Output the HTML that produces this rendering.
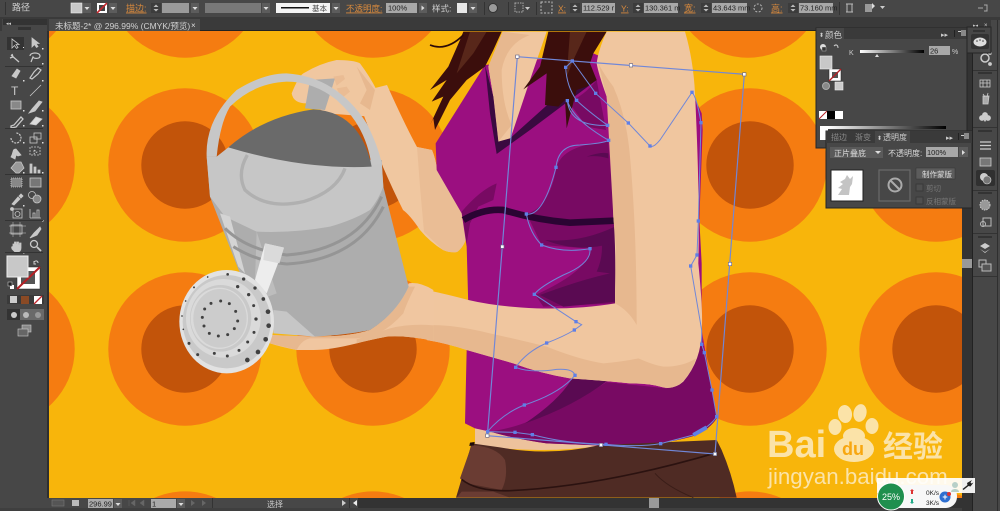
<!DOCTYPE html>
<html><head><meta charset="utf-8"><style>
html,body{margin:0;padding:0;background:#474747;width:1000px;height:511px;overflow:hidden}
svg{display:block;overflow:hidden;filter:blur(.35px)}
text{font-family:"Liberation Sans","Noto Sans CJK SC",sans-serif}
</style></head><body>
<svg width="1000" height="511" viewBox="0 0 1000 511" xmlns="http://www.w3.org/2000/svg">
<defs>
<g id="ring"><circle r="76.7" fill="#F57C11"/><circle r="43.7" fill="#C2540A"/></g>
<g id="ringb"><path d="M-68.2,498A76.7,76.7 0 0 1 68.2,498Z" fill="#F57C11"/><path d="M-26.2,498A43.7,43.7 0 0 1 26.2,498Z" fill="#C2540A"/></g>
<clipPath id="cv"><rect x="49" y="31" width="913" height="467"/></clipPath>
<g id="dd"><rect width="8" height="10" fill="#5c5c5c"/><path d="M1.5,4h5l-2.500,3z" fill="#ddd"/></g>
<g id="sp"><rect width="10" height="10" fill="#3c3c3c"/><path d="M2.500,4l2.500,-2.500 2.500,2.500zM2.500,6l2.500,2.500 2.500,-2.500z" fill="#bbb"/></g>
</defs>

<rect width="1000" height="511" fill="#474747"/>
<g clip-path="url(#cv)">
<rect x="49" y="31" width="913" height="467" fill="#F8B50B"/>
<use href="#ring" x="-2" y="-19"/><use href="#ring" x="185" y="-19"/><use href="#ring" x="373" y="-19"/><use href="#ring" x="748" y="-19"/><use href="#ring" x="935" y="-19"/>
<use href="#ring" x="-2" y="165"/><use href="#ring" x="185" y="165"/><use href="#ring" x="373" y="165"/><use href="#ring" x="750" y="165"/><use href="#ring" x="936" y="165"/>
<use href="#ring" x="-2" y="349"/><use href="#ring" x="185" y="349"/><use href="#ring" x="373" y="349"/><use href="#ring" x="750" y="349"/><use href="#ring" x="936" y="349"/>
<use href="#ringb" x="-2" y="35"/><use href="#ringb" x="185" y="35"/><use href="#ringb" x="373" y="35"/><use href="#ringb" x="750" y="35"/><use href="#ringb" x="936" y="35"/>

<!-- left arm -->
<path d="M367,90L387,85Q405,125 417,147L432,150Q436,160 437,170Q450,190 462,213Q468,228 467,237Q463,248 457,252Q450,253 443,250Q430,242 420,230Q410,215 403,210Q393,190 383,167L363,113Z" fill="#F0C7A0"/>
<path d="M417,147L432,150Q436,160 437,170Q450,190 462,213Q468,228 467,237Q463,248 457,252Q450,253 443,250L424,232Q420,190 417,147Z" fill="#EABD95"/>

<!-- woman, zoom coords -->
<g transform="translate(430,30) scale(.33333)">
<path d="M135,1190L135,1245Q330,1275 530,1245L530,1190Z" fill="#EDC29C"/>
<!-- tank -->
<path d="M165,105L17,340L20,420L95,550L110,650L115,830L110,960L105,1180L135,1195L180,1205Q270,1230 350,1240L600,1250Q720,1240 800,1215Q840,1195 860,1165L815,900L815,700L808,570L818,300L815,250L795,205L560,100L490,70Z" fill="#9B0F80"/>
<path d="M420,1045L710,1075L810,900L860,1165Q840,1195 800,1215Q720,1240 600,1250L350,1240Q270,1230 180,1205Q240,1195 280,1180Q340,1160 400,1130Q470,1095 540,1050Z" fill="#780A63"/>
<path d="M285,1180Q430,1130 535,1050L430,1040Q390,1110 285,1180Z" fill="#5A0A52"/>
<path d="M380,410Q400,345 535,335L552,560L556,820L340,830L316,795Q480,720 480,656L335,645L290,552Q360,530 380,410Z" fill="#780A63"/>
<path d="M515,635L555,590L558,815L400,830L330,795Q450,750 540,730L500,725Q520,680 515,635Z" fill="#5A0A52"/>
<path d="M345,630Q450,640 555,590L555,640L500,650Q420,660 345,630Z" fill="#5A0A52"/>
<path d="M470,380Q510,365 535,370L535,385Q500,375 470,380Z" fill="#5A0A52"/>
<path d="M95,545Q150,480 200,460L190,510L145,530L120,580L110,640Z" fill="#780A63"/>
<path d="M100,570Q160,535 220,540Q320,570 420,578L552,572" fill="none" stroke="#2B0433" stroke-width="20"/>
<path d="M500,150L528,300L470,290L415,215Q460,200 500,150Z" fill="#780A63"/>
<!-- chest -->
<path d="M218,5L350,5L300,150L240,330L205,335L190,200L175,110Z" fill="#F0C69F"/>
<path d="M218,5L300,15Q230,40 215,120Q215,220 245,285L205,335L190,200L175,110Z" fill="#E7B88F"/>
<path d="M165,105L180,250L200,372L300,300L500,150L480,110L240,325L205,335L190,200Z" fill="#3A0A40"/>
<!-- hair -->
<path d="M100,5L215,5L190,60L165,110L110,150L60,210L15,300L10,265L0,285L40,200L5,215L50,150L0,180L55,110L90,30Z" fill="#3B0E0C"/>
<path d="M120,5L170,5L130,70L80,130Z" fill="#58271A"/>
<path d="M355,5L530,5L490,70L480,100L500,150L470,170L440,180L410,295L405,210L385,230L345,225L350,130L280,178L330,110Z" fill="#3B0E0C"/>
<path d="M420,5L470,5L430,90L410,140Z" fill="#58271A"/>
<path d="M0,45Q50,65 100,15" fill="none" stroke="#2c0a08" stroke-width="5"/>
<!-- right arm -->
<path d="M530,5L765,5Q790,90 795,190Q810,500 805,700Q820,850 815,900Q815,990 760,1055Q735,1078 700,1072Q660,1060 600,1060Q500,1050 420,1045Q330,1030 250,1000L110,960Q50,940 -10,930L-10,780Q60,795 115,810Q200,830 320,835Q450,838 555,820L555,790Q558,650 550,560Q545,350 530,200Q505,130 500,100Q505,60 530,5Z" fill="#F0C69F"/>
<path d="M505,100Q520,130 550,170Q590,260 600,380Q620,600 620,885Q595,840 555,820L558,650L550,560L530,200Z" fill="#E7B88F"/>
<path d="M-10,885Q30,885 60,888Q120,895 180,910Q270,930 350,950Q450,990 520,1000Q580,995 625,985Q670,1005 700,1010Q760,1010 798,985Q780,1040 745,1065Q720,1078 700,1072Q660,1060 600,1060Q500,1050 420,1045Q330,1030 250,1000L110,960Q50,940 -10,930Z" fill="#E7B88F"/>
</g>

<!-- pants -->
<g transform="translate(400,440) scale(.33333)">
<path d="M215,10L300,22Q450,50 600,15L950,0L965,30Q995,100 1010,173L168,173Q190,100 215,10Z" fill="#4F2B24"/>
<path d="M215,15Q290,20 315,60Q325,110 305,150L200,130L180,115Z" fill="#6A3C33"/>
<path d="M170,173L330,173L280,155L185,155Z" fill="#6A3C33"/>
<path d="M185,118Q230,155 330,152Q600,140 950,38" fill="none" stroke="#2b1210" stroke-width="5"/>
<path d="M765,100Q800,140 880,173" fill="none" stroke="#3a1d18" stroke-width="3"/>
<path d="M210,8l14,-2-2,10-14,2z" fill="#1e0c0a"/>
</g>

<!-- can -->
<g transform="translate(170,60) scale(.33333)">
<!-- hand top -->
<path d="M365,100Q385,50 400,40Q450,10 500,0Q550,0 570,10Q600,50 620,90L600,170L470,160Q420,130 410,130Q370,130 365,100Z" fill="#F0C7A0"/>
<path d="M560,20L615,90L600,150L570,130L590,90Z" fill="#E7B88F"/>
<path d="M405,145L420,60L495,55L465,150Z" fill="#ADADAD"/>
<path d="M490,50l30,-5 5,12-25,20zM500,85l30,-5 10,15-25,20z" fill="#E7B88F" opacity=".7"/>
<!-- bottom hand -->
<path d="M300,825L430,830Q540,830 600,810Q680,760 716,670Q750,665 790,690L790,842Q700,825 650,830Q600,840 560,850Q480,870 430,870L380,870Q330,860 300,850Z" fill="#F0C6A0"/>
<path d="M300,825L430,830Q540,830 600,810Q680,760 716,680L735,680Q710,730 700,760Q650,815 600,830L560,835L420,835Q395,840 380,870L300,850Z" fill="#E7B88F"/>
<path d="M790,796Q720,790 660,805L560,838L560,850Q600,840 650,830Q700,825 790,842Z" fill="#E7B88F"/>
<!-- body -->
<path d="M110,290L120,410L210,640L270,780L300,810L430,830Q530,825 600,810Q680,760 716,680L640,380L635,300Z" fill="#ADADAD"/>
<path d="M110,290L140,290L175,262L600,320L635,305L640,380Q625,420 600,450Q550,480 480,500Q370,520 260,515L165,470L120,410Z" fill="#C6C6C6"/>
<path d="M260,515L320,700L280,715L255,660Z" fill="#BDBDBD"/>
<path d="M310,750L350,755L435,830L310,820Z" fill="#C6C6C6"/>
<path d="M150,460L180,470L225,640L205,620Z" fill="#D4D4D4"/>
<path d="M165,505Q230,570 350,585Q560,570 635,410" fill="none" stroke="#959595" stroke-width="9"/>
<path d="M190,560Q260,605 350,612Q560,600 640,440" fill="none" stroke="#959595" stroke-width="9"/>
<path d="M232,285Q200,340 225,390Q290,450 400,425Q500,395 525,325" fill="none" stroke="#B0B0B0" stroke-width="10"/>
<!-- opening -->
<path d="M175,262Q280,170 430,148Q570,155 605,320Q400,330 175,262Z" fill="#6A6A6A"/>
<!-- handle -->
<path d="M140,290L110,290Q105,180 200,90Q280,40 350,40Q500,50 590,190Q625,260 635,310L605,320Q590,200 500,120Q430,65 350,65Q250,70 180,140Q150,190 140,290Z" fill="#C7C7C7"/>
<!-- spout strip -->
<path d="M285,550L342,563L290,700L255,660Z" fill="#EDEDED"/>
<path d="M285,550L342,563L328,610L280,600Z" fill="#DADADA"/>
<!-- rose -->
<ellipse cx="170" cy="785" rx="142" ry="155" fill="#E2E2E2"/>
<ellipse cx="170" cy="785" rx="132" ry="140" fill="#C9C9C9"/>
<ellipse cx="160" cy="775" rx="112" ry="118" fill="#DADADA"/>
<ellipse cx="152" cy="775" rx="92" ry="100" fill="#C9C9C9"/>
<ellipse cx="148" cy="775" rx="86" ry="92" fill="#DADADA"/>
<ellipse cx="150" cy="775" rx="80" ry="88" fill="#CCCCCC"/>
<g fill="#404040">
<circle cx="152" cy="723" r="4.500"/><circle cx="178" cy="731" r="4.500"/><circle cx="197" cy="754" r="4.500"/><circle cx="203" cy="783" r="4.500"/><circle cx="193" cy="806" r="4.500"/><circle cx="173" cy="824" r="4.500"/><circle cx="145" cy="828" r="4.500"/><circle cx="118" cy="820" r="4.500"/><circle cx="102" cy="798" r="4.500"/><circle cx="97" cy="772" r="4.500"/><circle cx="104" cy="747" r="4.500"/><circle cx="123" cy="730" r="4.500"/>
<circle cx="173" cy="643" r="4"/><circle cx="221" cy="657" r="5"/><circle cx="255" cy="684" r="5"/><circle cx="280" cy="717" r="5.500"/><circle cx="294" cy="755" r="7"/><circle cx="296" cy="797" r="7"/><circle cx="287" cy="838" r="7"/><circle cx="264" cy="876" r="7"/><circle cx="232" cy="900" r="7"/><circle cx="172" cy="888" r="4.500"/><circle cx="133" cy="880" r="4.500"/><circle cx="83" cy="884" r="4.500"/><circle cx="57" cy="850" r="4.500"/><circle cx="40" cy="808" r="2.500"/><circle cx="36" cy="768" r="2.500"/><circle cx="47" cy="723" r="2.500"/><circle cx="72" cy="682" r="3"/><circle cx="113" cy="651" r="2.500"/>
<circle cx="203" cy="680" r="5"/><circle cx="236" cy="704" r="5"/><circle cx="251" cy="737" r="4.500"/><circle cx="258" cy="777" r="5"/><circle cx="252" cy="817" r="4.500"/><circle cx="233" cy="846" r="4.500"/><circle cx="207" cy="871" r="4.500"/>
</g>
</g>

<!-- selection path -->
<g transform="translate(430,30) scale(.33333)">
<path d="M262,80L943,133L855,1272L172,1217Z" fill="none" stroke="#7087D8" stroke-width="3.500"/>
<path d="M172,1205Q220,1150 283,1125Q390,1090 435,1036Q430,1015 380,1018Q300,1030 257,1012Q290,965 350,939Q400,920 433,900L455,884L438,875L313,793Q330,770 400,735Q485,700 480,656Q400,670 335,645Q300,610 289,552Q340,560 378,412Q385,345 450,345Q520,340 536,331Q430,270 412,212Q420,290 533,286Q470,240 440,211Q410,170 407,112L427,93L497,190L595,279L660,348Q670,355 690,330L786,187Q800,200 813,278L805,573L801,675L782,708L815,900L815,943L823,968L846,1080L860,1160Q840,1190 790,1215L692,1241Q630,1252 528,1243Q400,1240 307,1214L255,1207Z" fill="none" stroke="#7087D8" stroke-width="3"/>
<path d="M790,1215L830,1192" stroke="#5F7FE6" stroke-width="12" fill="none"/>
<g fill="#5F7FE6">
<rect x="168" y="1200" width="10" height="10"/><rect x="278" y="1120" width="10" height="10"/><rect x="430" y="1031" width="10" height="10"/><rect x="252" y="1007" width="10" height="10"/><rect x="345" y="934" width="10" height="10"/><rect x="428" y="895" width="10" height="10"/><rect x="433" y="870" width="10" height="10"/><rect x="308" y="788" width="10" height="10"/><rect x="475" y="651" width="10" height="10"/><rect x="330" y="640" width="10" height="10"/><rect x="284" y="547" width="10" height="10"/><rect x="373" y="407" width="10" height="10"/><rect x="531" y="326" width="10" height="10"/><rect x="407" y="207" width="10" height="10"/><rect x="528" y="281" width="10" height="10"/><rect x="435" y="206" width="10" height="10"/><rect x="402" y="107" width="10" height="10"/><rect x="422" y="88" width="10" height="10"/><rect x="492" y="185" width="10" height="10"/><rect x="590" y="274" width="10" height="10"/><rect x="655" y="343" width="10" height="10"/><rect x="781" y="182" width="10" height="10"/><rect x="808" y="273" width="10" height="10"/><rect x="800" y="568" width="10" height="10"/><rect x="796" y="670" width="10" height="10"/><rect x="777" y="703" width="10" height="10"/><rect x="810" y="938" width="10" height="10"/><rect x="818" y="963" width="10" height="10"/><rect x="841" y="1075" width="10" height="10"/><rect x="855" y="1155" width="10" height="10"/><rect x="687" y="1236" width="10" height="10"/><rect x="523" y="1238" width="10" height="10"/><rect x="302" y="1209" width="10" height="10"/><rect x="250" y="1202" width="10" height="10"/>
</g>
<g fill="#fff" stroke="#6a6a8a" stroke-width="2">
<rect x="257" y="75" width="10" height="10"/><rect x="598" y="101" width="10" height="10"/><rect x="938" y="128" width="10" height="10"/><rect x="895" y="697" width="10" height="10"/><rect x="850" y="1267" width="10" height="10"/><rect x="508" y="1240" width="10" height="10"/><rect x="167" y="1212" width="10" height="10"/><rect x="212" y="645" width="10" height="10"/>
</g>
</g>

<!-- watermark -->
<g fill="#FBE3A8">
<text x="767" y="457" font-size="38" font-weight="bold">Bai</text>
<ellipse cx="845" cy="414" rx="7" ry="9" transform="rotate(-8 845 414)"/><ellipse cx="860" cy="413" rx="6.500" ry="9" transform="rotate(12 860 413)"/><ellipse cx="835" cy="427" rx="6.500" ry="8"/><ellipse cx="872" cy="426" rx="6.500" ry="8"/>
<ellipse cx="854" cy="449" rx="20" ry="13"/><ellipse cx="854" cy="436" rx="11" ry="8"/>
<text x="842" y="455" font-size="18" font-weight="bold" fill="#F8A70F">du</text>
<text x="883" y="457" font-size="30" font-weight="bold">经验</text>
<text x="768" y="484" font-size="22.300">jingyan.baidu.com</text>
</g>
</g>
<rect x="47" y="31" width="2" height="467" fill="#2f2f2f"/>

<!-- top bar -->
<rect width="1000" height="17" fill="#474747"/>
<rect y="17" width="1000" height="14" fill="#3a3a3a"/>
<rect y="30" x="49" width="951" height="1" fill="#222"/>
<rect x="49" y="19" width="151" height="12" fill="#4a4a4a"/>
<text x="55" y="29" font-size="8.500" fill="#d0d0d0">未标题-2* @ 296.99% (CMYK/预览)</text>
<text x="191" y="28" font-size="8" fill="#ddd">×</text>
<rect x="5" y="2" width="1" height="13" fill="#333"/>
<text x="12" y="10.500" font-size="9" fill="#d0d0d0">路径</text>
<rect x="71" y="3" width="11" height="10" fill="#C8C8C8" stroke="#eee" stroke-width=".6"/>
<use href="#dd" x="83" y="3"/>
<rect x="97" y="3" width="10" height="10" fill="#fff"/><rect x="99" y="5" width="6" height="6" fill="#444"/><path d="M97,13L107,3" stroke="#c1272d" stroke-width="1.600"/>
<use href="#dd" x="109" y="3"/>
<text x="126" y="11.500" font-size="9" fill="#D98A3D" text-decoration="underline">描边:</text>
<use href="#sp" x="151" y="3"/>
<rect x="162" y="3" width="27" height="10" fill="#9a9a9a"/><use href="#dd" x="191" y="3"/>
<rect x="205" y="3" width="56" height="10" fill="#787878"/><use href="#dd" x="262" y="3"/>
<rect x="276" y="3" width="54" height="10" fill="#f4f4f4"/><rect x="281" y="7" width="28" height="1.500" fill="#111"/><text x="312" y="11" font-size="7.500" fill="#444">基本</text>
<use href="#dd" x="332" y="3"/>
<text x="346" y="11.500" font-size="8.500" fill="#D98A3D" text-decoration="underline">不透明度:</text>
<rect x="386" y="3" width="31" height="10" fill="#a8a8a8"/><text x="388" y="10.500" font-size="7.500" fill="#222">100%</text>
<rect x="419" y="3" width="8" height="10" fill="#5c5c5c"/><path d="M421.500,5.500l3,2.500-3,2.500z" fill="#ddd"/>
<text x="432" y="11.500" font-size="8.500" fill="#d0d0d0">样式:</text>
<rect x="457" y="3" width="10" height="10" fill="#e8e8e8"/><use href="#dd" x="469" y="3"/>
<circle cx="493" cy="8" r="4.500" fill="#9a9a9a" stroke="#333"/><rect x="484" y="2" width="1" height="13" fill="#333"/>
<rect x="508" y="2" width="1" height="13" fill="#333"/>
<rect x="515" y="3" width="8" height="9" fill="none" stroke="#aaa" stroke-dasharray="1.500 1"/><path d="M525,7h5l-2.500,3z" fill="#ccc"/>
<rect x="536" y="2" width="1" height="13" fill="#333"/>
<rect x="541" y="2" width="11" height="11" fill="none" stroke="#bbb" stroke-dasharray="2 1.500"/>
<text x="558" y="11.500" font-size="8.500" fill="#D98A3D" text-decoration="underline">X:</text>
<use href="#sp" x="570" y="3"/><rect x="582" y="3" width="33" height="10" fill="#a8a8a8"/><text x="583" y="10.500" font-size="7.500" fill="#222">112.529 r</text>
<text x="621" y="11.500" font-size="8.500" fill="#D98A3D" text-decoration="underline">Y:</text>
<use href="#sp" x="633" y="3"/><rect x="644" y="3" width="34" height="10" fill="#a8a8a8"/><text x="645" y="10.500" font-size="7.500" fill="#222">130.361 m</text>
<text x="684" y="11.500" font-size="9" fill="#D98A3D" text-decoration="underline">宽:</text>
<use href="#sp" x="701" y="3"/><rect x="712" y="3" width="35" height="10" fill="#a8a8a8"/><text x="713" y="10.500" font-size="7.500" fill="#222">43.643 mm</text>
<circle cx="758" cy="8" r="4" fill="none" stroke="#bbb" stroke-dasharray="2 1.500"/>
<text x="771" y="11.500" font-size="9" fill="#D98A3D" text-decoration="underline">高:</text>
<use href="#sp" x="788" y="3"/><rect x="799" y="3" width="34" height="10" fill="#a8a8a8"/><text x="800" y="10.500" font-size="7.500" fill="#222">73.160 mm</text>
<rect x="839" y="2" width="1" height="13" fill="#333"/>
<path d="M846,4h7M846,12h7M847,4v8M852,4v8" stroke="#bbb" fill="none"/>
<rect x="865" y="4" width="7" height="8" fill="#999"/><path d="M872,3l3,3-3,3z" fill="#ddd"/><path d="M880,6h5l-2.500,3z" fill="#ccc"/>
<path d="M978,8h5M984,5h3v6h-3" stroke="#aaa" fill="none"/>

<!-- left tools -->
<rect x="2" y="19" width="45" height="479" fill="#474747"/>
<rect x="3" y="19" width="44" height="6" fill="#333"/>
<text x="6" y="25" font-size="5" fill="#ccc">◂◂</text>
<rect x="18" y="27" width="13" height="3" fill="#333"/>
<rect x="7" y="37" width="17" height="13" fill="#333"/>
<g stroke="#c8c8c8" fill="#c8c8c8" stroke-width=".8">
<path d="M12,39v9l2.500,-2.500 2,3 1.500,-1 -2,-3h3z" fill="none"/>
<path d="M32,38v9l2.500,-2.500 2,3 1.500,-1 -2,-3h3z"/>
<path d="M11,55l8,7M12,54l1,3-3,1" fill="none" stroke-width="1.300"/>
<path d="M30,56c0,-4 10,-4 10,0c0,3-6,3-7,1l-2,5" fill="none" stroke-width="1.200"/>
<path d="M12,76l5,-7 3,2-4,7z"/>
<path d="M30,78l4,-6 4,-4 3,2-3,4-6,5z" fill="none" stroke-width="1.200"/>
<text x="11" y="95" font-size="12" font-family="Liberation Serif" stroke="none">T</text>
<path d="M30,96L41,85" fill="none"/>
<rect x="11" y="101" width="10" height="8" fill="#888"/>
<path d="M29,113l6,-2 7,-9-3,-1-7,8z"/>
<path d="M11,126l3,-1 7,-8 2,2-7,8-5,1z" fill="none" stroke-width="1.300"/>
<path d="M30,124l6,-7 6,2-6,6z" fill="#ddd"/>
<path d="M11,138a5,5 0 1,0 5,-5" fill="none" stroke-dasharray="2 1" stroke-width="1.200"/>
<rect x="30" y="137" width="7" height="6" fill="none"/><rect x="34" y="133" width="7" height="6" fill="none"/>
<path d="M11,157c3,-5 1,-8 5,-8l5,6-3,1-2,-1-1,4z"/>
<path d="M30,147v8h10v-8zM34,150l3,2-3,2z" fill="none" stroke-dasharray="2 1"/>
<path d="M11,168l5,-6h5l3,6-5,5h-3z" fill="#999"/>
<path d="M30,173v-9h2v9zM34,173v-6h2v6zM38,173v-3h2v3z"/>
<rect x="11" y="178" width="11" height="9" fill="#888" stroke-dasharray="1 1"/>
<rect x="30" y="178" width="11" height="9" fill="#777"/>
<path d="M12,204l6,-7 2,2-6,6zM19,196l2,-2 2,2-2,2z"/>
<circle cx="32" cy="195" r="3.500" fill="none"/><circle cx="37" cy="199" r="4" fill="#888"/>
<rect x="13" y="209" width="9" height="9" fill="none"/><circle cx="17.500" cy="214" r="2.500" fill="none"/><circle cx="12" cy="209" r="1.500"/>
<path d="M30,218v-9M33,218v-5h2v5zM37,218v-8h2v8zM41,218h-11" fill="none"/>
<rect x="11" y="225" width="11" height="9" fill="none"/><path d="M9,226h17M9,233h17M13,222v15M20,222v15" fill="none" stroke-width=".5"/>
<path d="M30,238l4,-5 6,-6 1,2-4,6z"/>
<path d="M12,249c-1,-2 0,-3 1,-2v-3h1.500v-2h1.500v2h1v-2h1.500v3h1v-2h1.500v5c0,3-2,4-4,4h-2z"/>
<circle cx="34" cy="244" r="3.500" fill="none" stroke-width="1.300"/><path d="M37,247l4,4" stroke-width="1.800" fill="none"/>
</g>
<g fill="#ddd"><rect x="23" y="47" width="1" height="1"/><rect x="42" y="48" width="1.500" height="1.500"/><rect x="42" y="63" width="1.500" height="1.500"/><rect x="23" y="80" width="1.500" height="1.500"/><rect x="42" y="80" width="1.500" height="1.500"/><rect x="23" y="110" width="1.500" height="1.500"/><rect x="42" y="110" width="1.500" height="1.500"/><rect x="23" y="125" width="1.500" height="1.500"/><rect x="42" y="125" width="1.500" height="1.500"/><rect x="23" y="142" width="1.500" height="1.500"/><rect x="42" y="142" width="1.500" height="1.500"/><rect x="23" y="172" width="1.500" height="1.500"/><rect x="42" y="172" width="1.500" height="1.500"/><rect x="23" y="205" width="1.500" height="1.500"/><rect x="42" y="220" width="1.500" height="1.500"/><rect x="23" y="252" width="1.500" height="1.500"/></g>
<g fill="#333"><rect x="5" y="66" width="38" height="1"/><rect x="5" y="128" width="38" height="1"/><rect x="5" y="174" width="38" height="1"/><rect x="5" y="220" width="38" height="1"/><rect x="5" y="252" width="38" height="1"/></g>
<rect x="17" y="267" width="23" height="22" fill="#fff" stroke="#222" stroke-width=".5"/><rect x="21" y="271" width="14" height="13" fill="#555"/><path d="M17,289L40,267" stroke="#b32025" stroke-width="2"/>
<rect x="7" y="256" width="21" height="21" fill="#C8C8C8" stroke="#eee"/>
<path d="M34,262c2,-2 4,-1 4,1" stroke="#ccc" fill="none"/><path d="M34,261v3h2" stroke="#ccc" fill="none"/>
<rect x="10" y="285" width="4" height="4" fill="#fff"/><rect x="8" y="282" width="4" height="4" fill="#222" stroke="#ddd" stroke-width=".5"/>
<rect x="7" y="295" width="37" height="9" fill="#3a3a3a"/>
<rect x="10" y="296" width="7" height="7" fill="#ccc"/><rect x="21" y="296" width="8" height="8" fill="#8a4a25"/><rect x="34" y="296" width="8" height="8" fill="#fff"/><path d="M34,304l8,-8" stroke="#c1272d" stroke-width="1.300"/>
<rect x="7" y="309" width="37" height="11" fill="#6a6a6a"/><rect x="7" y="309" width="13" height="11" fill="#333"/>
<circle cx="14" cy="315" r="3" fill="#ccc"/><circle cx="26" cy="315" r="3" fill="#bbb"/><circle cx="38" cy="315" r="3" fill="#999"/>
<rect x="22" y="325" width="9" height="7" fill="#888" stroke="#ccc" stroke-width=".6"/><rect x="18" y="329" width="10" height="7" fill="#666" stroke="#ccc" stroke-width=".6"/>

<!-- status bar -->
<rect x="49" y="498" width="951" height="13" fill="#474747"/>
<rect x="52" y="500" width="12" height="6" fill="#555" stroke="#777" stroke-width=".6"/>
<rect x="72" y="500" width="7" height="6" fill="#bbb"/>
<rect x="88" y="499" width="25" height="9" fill="#aaa"/><text x="89" y="506.500" font-size="7.500" fill="#222">296.99</text><use href="#dd" x="114" y="499"/>
<path d="M129,500v6M135,500l-4,3 4,3zM144,500l-4,3 4,3z" fill="#666" stroke="#666" stroke-width=".5"/>
<rect x="151" y="499" width="25" height="9" fill="#aaa"/><text x="152" y="506.500" font-size="7.500" fill="#222">1</text><use href="#dd" x="177" y="499"/>
<path d="M191,500l4,3-4,3zM202,500l4,3-4,3z" fill="#666"/>
<rect x="212" y="498" width="1" height="10" fill="#333"/>
<text x="267" y="507" font-size="8" fill="#ccc">选择</text>
<path d="M342,500l4,3-4,3z" fill="#ccc"/><rect x="349" y="498" width="1" height="10" fill="#333"/>
<path d="M357,500l-4,3 4,3z" fill="#eee"/>
<rect x="358" y="498" width="604" height="10" fill="#333"/>
<rect x="649" y="498" width="10" height="10" fill="#999"/>
<rect x="0" y="508" width="1000" height="3" fill="#3f3f3f"/>

<!-- right scrollbar & dock -->
<rect x="962" y="31" width="11" height="480" fill="#333"/>
<rect x="962" y="259" width="10" height="9" fill="#999"/>
<rect x="973" y="20" width="27" height="491" fill="#474747"/>
<rect x="972" y="20" width="1" height="491" fill="#222"/>
<rect x="997" y="20" width="1" height="491" fill="#2f2f2f"/>
<g fill="#333">
<rect x="973" y="70" width="24" height="1"/><rect x="973" y="127" width="24" height="1"/><rect x="973" y="190" width="24" height="1"/><rect x="973" y="233" width="24" height="1"/><rect x="973" y="276" width="24" height="1"/>
<rect x="978" y="72" width="14" height="2"/><rect x="978" y="130" width="14" height="2"/><rect x="978" y="192" width="14" height="2"/><rect x="978" y="236" width="14" height="2"/>
</g>
<g stroke="#ccc" fill="#ccc" stroke-width=".8">
<circle cx="985" cy="58" r="4" fill="none" stroke-width="1.500"/><circle cx="990" cy="53" r="1.500"/><circle cx="990" cy="64" r="1.500"/>
<rect x="980" y="80" width="10" height="7" fill="none"/><path d="M983,80v7M987,80v7M980,83h10" fill="none"/>
<path d="M983,104h5l1,-8h-6z" fill="#aaa"/><path d="M983,94l2,3M988,93l-1,4" fill="none"/>
<circle cx="985" cy="115" r="2.500"/><circle cx="982" cy="118" r="2.500"/><circle cx="988" cy="118" r="2.500"/><rect x="984.500" y="118" width="1" height="3"/>
<path d="M980,142h11M980,145.500h11M980,149h11" stroke-width="1.300"/>
<rect x="980" y="158" width="11" height="8" fill="#777"/>
</g>
<rect x="976" y="170" width="19" height="16" rx="2" fill="#303030"/><circle cx="984" cy="177" r="4" fill="#ccc"/><circle cx="987" cy="180" r="4" fill="#777" stroke="#ddd" stroke-width=".6"/>
<circle cx="985" cy="205" r="5" fill="#999" stroke="#ccc" stroke-dasharray="1.500 1"/>
<rect x="983" y="218" width="8" height="8" fill="none" stroke="#bbb"/><circle cx="983" cy="224" r="2.500" fill="none" stroke="#bbb"/>
<path d="M985,243l5,3-5,3-5,-3zM980,249l5,3 5,-3-5,4z" fill="#ccc"/>
<rect x="979" y="260" width="7" height="7" fill="none" stroke="#bbb"/><rect x="982" y="264" width="9" height="7" fill="#555" stroke="#bbb"/>

<!-- colour panel -->
<rect x="816" y="28" width="151" height="120" fill="#474747" stroke="#262626"/>
<rect x="816" y="28" width="151" height="11" fill="#3a3a3a"/>
<rect x="817" y="28" width="27" height="11" fill="#474747"/>
<text x="819" y="37" font-size="6" fill="#ccc">⬍</text><text x="825" y="38" font-size="8.500" fill="#ccc">颜色</text>
<text x="941" y="37" font-size="7" fill="#ccc">▸▸</text><rect x="954" y="30" width="1" height="7" fill="#222"/><rect x="958" y="31" width="3" height="1" fill="#ccc"/><rect x="961" y="30" width="5" height="6" fill="#888"/>
<circle cx="823" cy="47" r="3" fill="#ddd"/><rect x="822" y="47" width="4" height="4" fill="#333" stroke="#ccc" stroke-width=".4"/>
<path d="M834,46c2,-2 4,-1 4,2" stroke="#ccc" fill="none"/>
<rect x="829" y="69" width="12" height="12" fill="#fff" stroke="#222" stroke-width=".5"/><rect x="832" y="72" width="6" height="6" fill="#555"/><path d="M829,81l12,-12" stroke="#b32025" stroke-width="1.300"/>
<rect x="820" y="56" width="12" height="13" fill="#c8c8c8" stroke="#eee" stroke-width=".6"/>
<text x="849" y="55" font-size="7" fill="#ccc">K</text>
<defs><linearGradient id="kg"><stop offset="0" stop-color="#fff"/><stop offset="1" stop-color="#000"/></linearGradient></defs>
<rect x="860" y="50" width="64" height="3" fill="url(#kg)"/>
<path d="M877,54l2,3h-4z" fill="#ddd"/>
<rect x="929" y="46" width="21" height="9" fill="#a8a8a8"/><text x="930" y="53.500" font-size="7.500" fill="#222">26</text><text x="952" y="54" font-size="7" fill="#ccc">%</text>
<circle cx="826" cy="86" r="3.500" fill="#888" stroke="#aaa"/>
<rect x="835" y="82" width="8" height="8" fill="#ccc" stroke="#eee" stroke-width=".6"/>
<rect x="819" y="111" width="8" height="8" fill="#fff"/><path d="M819,119l8,-8" stroke="#b32025"/>
<rect x="827" y="111" width="8" height="8" fill="#000"/><rect x="835" y="111" width="8" height="8" fill="#fff"/>
<rect x="820" y="126" width="8" height="14" fill="#fff"/><rect x="828" y="126" width="118" height="3" fill="url(#kg)"/>

<!-- mini panel -->
<rect x="967" y="20" width="24" height="13" fill="#3a3a3a"/>
<text x="973" y="27" font-size="5" fill="#ccc">▸◂</text><text x="984" y="27" font-size="6" fill="#ccc">×</text>
<rect x="967" y="27" width="24" height="26" fill="#474747" stroke="#262626"/>
<rect x="973" y="30" width="12" height="2" fill="#333"/>
<rect x="971" y="34" width="18" height="15" rx="2" fill="#333"/>
<ellipse cx="980" cy="42" rx="6.500" ry="4.500" fill="#ddd"/><circle cx="977" cy="41" r=".8" fill="#444"/><circle cx="980" cy="40" r=".8" fill="#444"/><circle cx="983" cy="41" r=".8" fill="#444"/>

<!-- transparency panel -->
<rect x="826" y="131" width="146" height="77" fill="#474747" stroke="#262626"/>
<rect x="826" y="131" width="146" height="12" fill="#3a3a3a"/>
<rect x="875" y="131" width="35" height="12" fill="#474747"/>
<text x="831" y="140" font-size="8" fill="#888">描边</text><text x="855" y="140" font-size="8" fill="#888">渐变</text>
<text x="877" y="140" font-size="6" fill="#ccc">⬍</text><text x="883" y="140" font-size="8" fill="#ccc">透明度</text>
<text x="946" y="140" font-size="7" fill="#ccc">▸▸</text><rect x="958" y="133" width="1" height="7" fill="#222"/><rect x="961" y="135" width="3" height="1" fill="#ccc"/><rect x="964" y="133" width="5" height="6" fill="#888"/>
<rect x="830" y="147" width="53" height="11" fill="#5a5a5a"/>
<text x="834" y="156" font-size="8" fill="#ddd">正片叠底</text><path d="M875,151h6l-3,3z" fill="#ddd"/>
<text x="888" y="156" font-size="8" fill="#ddd">不透明度:</text>
<rect x="926" y="147" width="32" height="10" fill="#a8a8a8"/><text x="927" y="155" font-size="7.500" fill="#222">100%</text>
<rect x="959" y="147" width="9" height="10" fill="#5c5c5c"/><path d="M962,150l3,2.500-3,2.500z" fill="#ddd"/>
<rect x="831" y="170" width="32" height="31" fill="#fff" stroke="#222"/>
<path d="M847,175l3,4 3,-3 -1,8 -2,3 -1,8 -11,0 4,-6 -4,-1 5,-4 -3,-2 5,-3z" fill="#c4c4c4"/>
<rect x="879" y="170" width="31" height="31" fill="#474747" stroke="#6a6a6a" stroke-width="1.200"/>
<circle cx="895" cy="185" r="6.500" fill="none" stroke="#aaa" stroke-width="2"/><path d="M890.500,180.500l9,9" stroke="#aaa" stroke-width="2"/>
<rect x="916" y="168" width="39" height="11" fill="#5c5c5c" stroke="#333" stroke-width=".5"/><text x="922" y="177" font-size="7.500" fill="#ddd">制作蒙版</text>
<rect x="916" y="184" width="7" height="7" fill="#4f4f4f" stroke="#3a3a3a"/><text x="926" y="191" font-size="7.500" fill="#777">剪切</text>
<rect x="916" y="197" width="7" height="7" fill="#4f4f4f" stroke="#3a3a3a"/><text x="926" y="204" font-size="7.500" fill="#777">反相蒙版</text>

<!-- floating widget -->
<rect x="877" y="478" width="98" height="15" fill="#fff" opacity=".92"/>
<rect x="880" y="485" width="77" height="23" rx="11" fill="#f8f8f8"/>
<path d="M972,480l-5,3 .5,2-5,4 1,1 5,-4 2,.5 3,-4-2,1-1,-1z" fill="#222"/>
<circle cx="955" cy="485" r="3" fill="#b8d0c8"/><path d="M951,492c0,-4 8,-4 8,0z" fill="#b8d0c8"/>
<circle cx="891" cy="496.500" r="13.500" fill="#1F8F4E" stroke="#fff" stroke-width="1"/>
<text x="891" y="500" font-size="9" fill="#fff" text-anchor="middle">25%</text>
<path d="M910,491l2,-2 2,2h-1v3h-2v-3z" fill="#d33"/><path d="M911,499v3h-1l2,2 2,-2h-1v-3z" fill="#2a8"/>
<text x="926" y="495" font-size="6.500" fill="#222">0K/s</text><text x="926" y="505" font-size="6.500" fill="#222">3K/s</text>
<circle cx="945" cy="497" r="5.500" fill="#2E6FD0"/><text x="945" y="500" font-size="9" fill="#fff" text-anchor="middle" font-weight="bold">+</text><circle cx="949" cy="494" r="2" fill="#d33"/>
</svg>
</body></html>
